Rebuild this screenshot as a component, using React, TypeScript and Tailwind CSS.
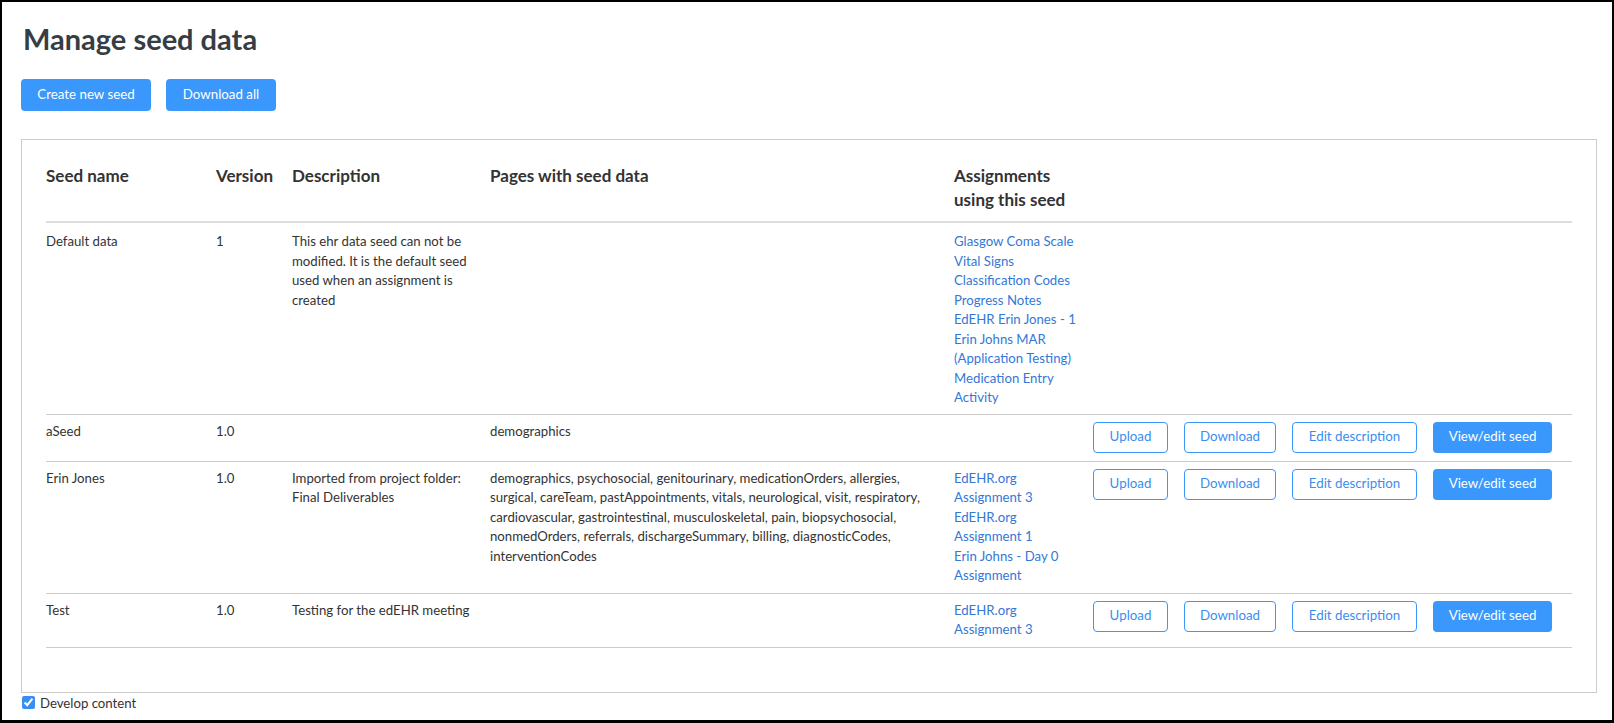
import React from "react";

type Row = {
  name: string;
  version: string;
  description: string;
  pages: string;
  assignments: string[];
  actions: boolean;
};

const rows: Row[] = [
  {
    name: "Default data",
    version: "1",
    description:
      "This ehr data seed can not be modified. It is the default seed used when an assignment is created",
    pages: "",
    assignments: [
      "Glasgow Coma Scale",
      "Vital Signs",
      "Classification Codes",
      "Progress Notes",
      "EdEHR Erin Jones - 1",
      "Erin Johns MAR (Application Testing)",
      "Medication Entry Activity",
    ],
    actions: false,
  },
  {
    name: "aSeed",
    version: "1.0",
    description: "",
    pages: "demographics",
    assignments: [],
    actions: true,
  },
  {
    name: "Erin Jones",
    version: "1.0",
    description: "Imported from project folder: Final Deliverables",
    pages:
      "demographics, psychosocial, genitourinary, medicationOrders, allergies, surgical, careTeam, pastAppointments, vitals, neurological, visit, respiratory, cardiovascular, gastrointestinal, musculoskeletal, pain, biopsychosocial, nonmedOrders, referrals, dischargeSummary, billing, diagnosticCodes, interventionCodes",
    assignments: ["EdEHR.org Assignment 3", "EdEHR.org Assignment 1", "Erin Johns - Day 0 Assignment"],
    actions: true,
  },
  {
    name: "Test",
    version: "1.0",
    description: "Testing for the edEHR meeting",
    pages: "",
    assignments: ["EdEHR.org Assignment 3"],
    actions: true,
  },
];

function Actions() {
  const outline =
    "h-[31px] rounded-[4px] border border-[#3a97fb] bg-white text-[13.3px] text-[#3a8ef0] flex items-center justify-center";
  return (
    <div className="flex justify-end gap-4 pr-5">
      <button className={`${outline} w-[75px]`}>Upload</button>
      <button className={`${outline} w-[92px]`}>Download</button>
      <button className={`${outline} w-[125px]`}>Edit description</button>
      <button className="h-[31px] w-[119px] rounded-[4px] bg-[#3a97fb] text-[13.3px] text-white flex items-center justify-center">
        View/edit seed
      </button>
    </div>
  );
}

export default function App() {
  return (
    <div className="h-[723px] overflow-hidden border-2 border-b-[3px] border-black bg-white font-['Lato',sans-serif] text-[#333]">
      <div className="pl-[19px] pr-[15px] pt-[19px]">
        <h1 className="pl-[2px] text-[29px] font-bold leading-[36px] text-[#363d45]">Manage seed data</h1>
        <div className="mt-[22px] flex gap-[15px]">
          <button className="h-[32px] w-[130px] rounded-[4px] bg-[#3a97fb] text-[13.3px] text-white">
            Create new seed
          </button>
          <button className="h-[32px] w-[110px] rounded-[4px] bg-[#3a97fb] text-[13.3px] text-white">
            Download all
          </button>
        </div>
        <div className="mt-[28px] border border-[#cccccc] px-6 pt-6 pb-[44px]">
          <table className="w-full table-fixed border-collapse text-left">
            <colgroup>
              <col className="w-[170px]" />
              <col className="w-[76px]" />
              <col className="w-[198px]" />
              <col className="w-[464px]" />
              <col className="w-[139px]" />
              <col />
            </colgroup>
            <thead>
              <tr className="border-b-2 border-[#dddddd] align-top text-[17px] font-bold leading-[24px] text-[#333]">
                <th className="pb-[9px] font-bold">Seed name</th>
                <th className="pb-[9px] font-bold">Version</th>
                <th className="pb-[9px] font-bold">Description</th>
                <th className="pb-[9px] font-bold">Pages with seed data</th>
                <th className="pb-[9px] pr-2 font-bold">Assignments using this seed</th>
                <th className="pb-[9px]"></th>
              </tr>
            </thead>
            <tbody className="text-[13.2px] leading-[19.5px]">
              {rows.map((r, i) => {
                const pad = i === 0 ? "pt-[9px] pb-[6px]" : i === 1 ? "pt-[7px] pb-[8px]" : "py-[7px]";
                return (
                  <tr key={r.name} className="border-b border-[#cccccc] align-top">
                    <td className={`${pad} pr-3`}>{r.name}</td>
                    <td className={`${pad} pr-3`}>{r.version}</td>
                    <td className={`${pad} pr-3`}>{r.description}</td>
                    <td className={`${pad} pr-3`}>{r.pages}</td>
                    <td className={`${pad} pr-3`}>
                      {r.assignments.map((a) => (
                        <a key={a} href="#" className="block text-[#3478d8]">
                          {a}
                        </a>
                      ))}
                    </td>
                    <td className={pad}>{r.actions ? <Actions /> : null}</td>
                  </tr>
                );
              })}
            </tbody>
          </table>
        </div>
        <label className="flex items-center pl-[1px] text-[13.2px] leading-[20px] text-[#333]">
          <input type="checkbox" defaultChecked className="m-0 h-[13px] w-[13px] accent-[#3a8ef0]" />
          <span className="ml-[5px]">Develop content</span>
        </label>
      </div>
    </div>
  );
}
